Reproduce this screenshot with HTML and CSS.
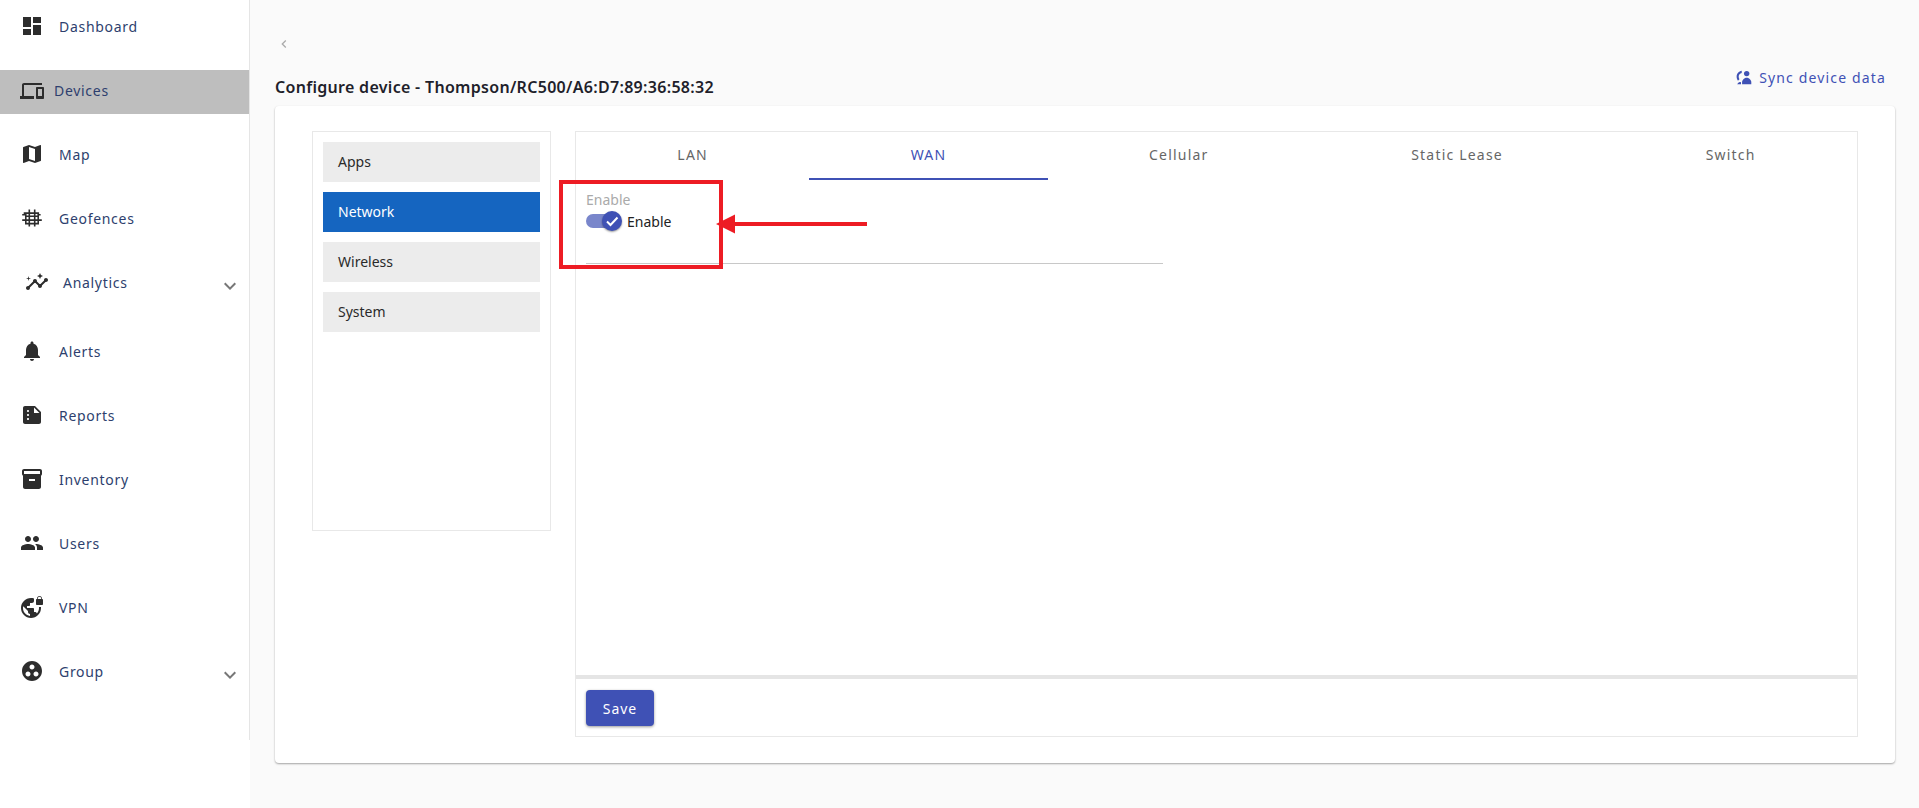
FILE: index.html
```html
<!DOCTYPE html>
<html>
<head>
    <meta charset="UTF-8">
    <title>Configure device</title>
    <link rel="stylesheet" href="styles.css">
</head>
<body>
    <div class="sidebar">
        <div class="nav">
            <a class="nav-item">
                <svg class="nav-icon" viewBox="0 0 24 24"><path d="M3 13h8V3H3v10zm0 8h8v-6H3v6zm10 0h8V11h-8v10zm0-18v6h8V3h-8z"/></svg>
                <span>Dashboard</span>
            </a>
            <a class="nav-item active">
                <svg class="nav-icon" viewBox="0 0 24 24"><path d="M4 6h18V4H4c-1.1 0-2 .9-2 2v11H0v3h14v-3H4V6zm19 2h-6c-.55 0-1 .45-1 1v10c0 .55.45 1 1 1h6c.55 0 1-.45 1-1V9c0-.55-.45-1-1-1zm-1 9h-4v-7h4v7z"/></svg>
                <span>Devices</span>
            </a>
            <a class="nav-item">
                <svg class="nav-icon" viewBox="0 0 24 24"><path d="M20.5 3l-.16.03L15 5.1 9 3 3.36 4.9c-.21.07-.36.25-.36.48V20.5c0 .28.22.5.5.5l.16-.03L9 18.9l6 2.1 5.64-1.9c.21-.07.36-.25.36-.48V3.5c0-.28-.22-.5-.5-.5zM15 19l-6-2.11V5l6 2.11V19z"/></svg>
                <span>Map</span>
            </a>
            <a class="nav-item">
                <svg class="nav-icon" viewBox="0 0 24 24"><path d="M8.5 3.6h1.6v2.6h3.8V3.6h1.6v2.6h3.6v1.7h1.5v1.6H19v3.8h2.8v1.6H19v3.5h-3.5v2.2h-1.6v-2.2h-3.8v2.2H8.5v-2.2H5v-3.5H2.2v-1.6H5V9.5H2.2V7.9h1.5V6.200h4.800zM6.600 7.900v1.600h1.900V7.900zm3.500 0v1.600h3.800V7.900zm5.400 0v1.600h1.900V7.900zm-8.900 3.200v2.200h1.900v-2.200zm3.500 0v2.200h3.800v-2.200zm5.400 0v2.200h1.900v-2.200zm-8.900 3.800v1.900h1.900v-1.900zm3.500 0v1.900h3.800v-1.900zm5.400 0v1.900h1.900v-1.900z"/></svg>
                <span>Geofences</span>
            </a>
            <a class="nav-item has-sub">
                <svg class="nav-icon" viewBox="0 0 24 24"><path d="M21 8c-1.450 0-2.260 1.440-1.930 2.510l-3.550 3.560c-.3-.09-.74-.09-1.040 0l-2.550-2.550C12.270 10.450 11.460 9 10 9c-1.450 0-2.270 1.440-1.930 2.520l-4.560 4.550C2.440 15.740 1 16.550 1 18c0 1.100.9 2 2 2 1.450 0 2.260-1.440 1.930-2.510l4.550-4.560c.3.09.74.09 1.040 0l2.550 2.550C12.730 16.550 13.540 18 15 18c1.450 0 2.270-1.440 1.930-2.520l3.560-3.550c1.070.33 2.510-.48 2.510-1.930 0-1.100-.9-2-2-2z"/><path d="M15 9l.94-2.070L18 6l-2.060-.93L15 3l-.92 2.070L12 6l2.080.93z"/><path d="M3.500 11L4 9l2-.5L4 8l-.5-2L3 8l-2 .5L3 9z"/></svg>
                <span>Analytics</span>
                <svg class="nav-chevron" viewBox="0 0 24 24"><path d="M7.410 8.590L12 13.170l4.590-4.580L18 10l-6 6-6-6z"/></svg>
            </a>
            <a class="nav-item">
                <svg class="nav-icon" viewBox="0 0 24 24"><path d="M12 22c1.100 0 2-.9 2-2h-4c0 1.100.89 2 2 2zm6-6v-5c0-3.070-1.640-5.640-4.500-6.320V4c0-.83-.67-1.500-1.500-1.500s-1.500.67-1.500 1.500v.68C7.630 5.360 6 7.920 6 11v5l-2 2v1h16v-1l-2-2z"/></svg>
                <span>Alerts</span>
            </a>
            <a class="nav-item">
                <svg class="nav-icon" viewBox="0 0 24 24"><path d="M15 3H5c-1.100 0-2 .9-2 2v14c0 1.100.9 2 2 2h14c1.100 0 2-.9 2-2V9l-6-6zM8 17c-.55 0-1-.45-1-1s.45-1 1-1 1 .45 1 1-.45 1-1 1zm0-4c-.55 0-1-.45-1-1s.45-1 1-1 1 .45 1 1-.45 1-1 1zm0-4c-.55 0-1-.45-1-1s.45-1 1-1 1 .45 1 1-.45 1-1 1zm6 1V4.500l5.500 5.500H14z"/></svg>
                <span>Reports</span>
            </a>
            <a class="nav-item">
                <svg class="nav-icon" viewBox="0 0 24 24"><path d="M20 2H4c-1 0-2 .9-2 2v3.010c0 .72.43 1.340 1 1.690V20c0 1.100 1.100 2 2 2h14c.9 0 2-.9 2-2V8.700c.57-.35 1-.97 1-1.690V4c0-1.100-1-2-2-2zm-5 12H9v-2h6v2zm5-7H4V4l16-.02V7z"/></svg>
                <span>Inventory</span>
            </a>
            <a class="nav-item">
                <svg class="nav-icon" viewBox="0 0 24 24"><path d="M16 11c1.660 0 2.990-1.340 2.990-3S17.660 5 16 5c-1.660 0-3 1.340-3 3s1.340 3 3 3zm-8 0c1.660 0 2.990-1.340 2.990-3S9.660 5 8 5C6.340 5 5 6.340 5 8s1.340 3 3 3zm0 2c-2.330 0-7 1.170-7 3.500V19h14v-2.500c0-2.330-4.670-3.500-7-3.500zm8 0c-.29 0-.62.02-.97.05 1.160.84 1.970 1.970 1.970 3.450V19h6v-2.500c0-2.330-4.670-3.500-7-3.500z"/></svg>
                <span>Users</span>
            </a>
            <a class="nav-item">
                <svg class="nav-icon" viewBox="0 0 24 24"><path d="M22 4v-.5C22 2.120 20.880 1 19.500 1S17 2.120 17 3.500V4c-.55 0-1 .45-1 1v4c0 .55.45 1 1 1h5c.55 0 1-.45 1-1V5c0-.55-.45-1-1-1zm-.8 0h-3.400v-.5c0-.94.76-1.700 1.700-1.700s1.700.76 1.700 1.700V4zm-2.280 8c.04.33.08.66.08 1 0 2.080-.8 3.970-2.100 5.390-.26-.81-1-1.390-1.900-1.390h-1v-3c0-.55-.45-1-1-1H7v-2h2c.55 0 1-.45 1-1V8h2c1.100 0 2-.9 2-2V3.460c-.95-.3-1.950-.46-3-.46C5.480 3 1 7.480 1 13s4.480 10 10 10 10-4.480 10-10c0-.34-.02-.67-.05-1h-2.030zM10 20.930c-3.950-.49-7-3.850-7-7.930 0-.62.08-1.210.21-1.790L8 16v1c0 1.100.9 2 2 2v1.930z"/></svg>
                <span>VPN</span>
            </a>
            <a class="nav-item has-sub">
                <svg class="nav-icon" viewBox="0 0 24 24"><path d="M12 2C6.480 2 2 6.480 2 12s4.480 10 10 10 10-4.480 10-10S17.520 2 12 2zM8 17.500c-1.380 0-2.500-1.120-2.500-2.500s1.120-2.500 2.500-2.500 2.500 1.120 2.500 2.500-1.120 2.500-2.500 2.500zM9.500 8c0-1.380 1.120-2.500 2.500-2.500s2.500 1.120 2.500 2.500-1.120 2.500-2.500 2.500S9.500 9.380 9.500 8zm6.500 9.500c-1.380 0-2.500-1.120-2.500-2.500s1.120-2.500 2.500-2.500 2.500 1.120 2.500 2.500-1.120 2.500-2.500 2.500z"/></svg>
                <span>Group</span>
                <svg class="nav-chevron" viewBox="0 0 24 24"><path d="M7.410 8.590L12 13.170l4.590-4.580L18 10l-6 6-6-6z"/></svg>
            </a>
        </div>
    </div>

    <div class="main">
        <div class="back">
            <svg viewBox="0 0 24 24"><path d="M15.410 7.410L14 6l-6 6 6 6 1.410-1.410L10.830 12z"/></svg>
        </div>
        <div class="title-row">
            <h1>Configure device - Thompson/RC500/A6:D7:89:36:58:32</h1>
            <a class="sync">
                <svg viewBox="0 0 24 24"><path d="M9.500 2.500v3.200C7 6 5.200 8.200 5.200 11c0 1.300.4 2.500 1.100 3.500l-2.100 2C3 15 2.300 13.100 2.300 11 2.300 6.400 5.400 3 9.500 2.500zM3 21.500l1.400-1.600c.8-.9 1.700-1.300 2.600-1.400l1.300-.2.200 3.200z"/><circle cx="16.500" cy="6.500" r="3.800"/><path d="M10 21.500v-3.200c0-3.200 3.800-6 6.500-6s6.500 2.800 6.500 6v3.200z"/></svg>
                <span>Sync device data</span>
            </a>
        </div>
        <div class="card">
            <div class="menu">
                <div class="menu-item">Apps</div>
                <div class="menu-item selected">Network</div>
                <div class="menu-item">Wireless</div>
                <div class="menu-item">System</div>
            </div>
            <div class="panel">
                <div class="tabs">
                    <div class="tab">LAN</div>
                    <div class="tab current">WAN</div>
                    <div class="tab">Cellular</div>
                    <div class="tab">Static Lease</div>
                    <div class="tab">Switch</div>
                </div>
                <div class="panel-body">
                    <div class="field">
                        <div class="field-label">Enable</div>
                        <div class="toggle-row">
                            <div class="toggle">
                                <div class="toggle-thumb">
                                    <svg viewBox="0 0 20 20"><path d="M5 10.500l3.500 3.500L15.500 6.500" fill="none" stroke="#fff" stroke-width="2"/></svg>
                                </div>
                            </div>
                            <span>Enable</span>
                        </div>
                    </div>
                </div>
                <div class="panel-footer">
                    <button class="save">Save</button>
                </div>
                <div class="callout-box"></div>
                <svg class="callout-arrow" width="152" height="20" viewBox="0 0 152 20"><path d="M0 10L19 0.500V8H151V12H19V19.500z" fill="#ed1c24"/></svg>
            </div>
        </div>
    </div>
</body>
</html>
```

FILE: styles.css
```css
* {
    box-sizing: border-box;
}
html, body {
    height: 100%;
}
body {
    font-family: "Noto Sans", sans-serif;
    font-size: 14px;
    background-color: #fafafa;
    margin: 0;
    display: flex;
    overflow: hidden;
    color: #222;
}
.sidebar {
    width: 250px;
    flex: none;
    background-color: #fff;
}
.nav {
    height: 740px;
    padding-top: 4px;
    border-right: 1px solid #e5e5e5;
}
.nav-item {
    display: flex;
    align-items: center;
    height: 44px;
    margin-bottom: 20px;
    padding-left: 20px;
    color: #2e3f6e;
    letter-spacing: 0.7px;
}
.nav-icon {
    width: 24px;
    height: 24px;
    fill: #2d2d2d;
    margin-right: 15px;
    flex: none;
}
.nav-item.active {
    margin-top: 22px;
    margin-bottom: 18px;
    padding-bottom: 3px;
    background-color: #bebebe;
}
.nav-item.active .nav-icon {
    margin-right: 10px;
}
.nav-item.has-sub {
    margin-bottom: 25px;
}
.nav-item.has-sub:nth-child(5) .nav-icon {
    margin-left: 5px;
    margin-right: 14px;
}
.nav-chevron {
    width: 24px;
    height: 24px;
    fill: #777;
    margin-left: auto;
    margin-right: 7px;
    margin-top: 8px;
}
.main {
    flex: 1;
    min-width: 0;
    padding: 0 24px 0 25px;
}
.back {
    height: 58px;
    padding: 36px 0 0 1px;
}
.back svg {
    width: 16px;
    height: 16px;
    fill: #aaa;
    display: block;
}
.title-row {
    display: flex;
    justify-content: space-between;
    height: 48px;
}
.title-row h1 {
    margin: 18px 0 0;
    font-size: 16px;
    line-height: 22px;
    font-weight: 600;
    color: #1f1f2b;
    letter-spacing: 0.3px;
}
.sync {
    display: flex;
    align-items: center;
    gap: 7px;
    height: 20px;
    margin: 9px 9px 0 0;
    color: #3f51b5;
    letter-spacing: 1.15px;
}
.sync svg {
    width: 17px;
    height: 17px;
    fill: #3f51b5;
}
.card {
    display: flex;
    gap: 24px;
    height: 657px;
    padding: 25px 37px 26px;
    background-color: #fff;
    border-radius: 4px;
    box-shadow: 0 1px 2px rgba(0,0,0,0.35);
}
.menu {
    width: 239px;
    height: 400px;
    flex: none;
    display: flex;
    flex-direction: column;
    gap: 10px;
    padding: 10px;
    border: 1px solid #e8e8e8;
}
.menu-item {
    height: 40px;
    line-height: 40px;
    padding-left: 15px;
    background-color: #ececec;
    color: #2a2a2a;
}
.menu-item.selected {
    background-color: #1565c0;
    color: #fff;
}
.panel {
    flex: 1;
    min-width: 0;
    display: flex;
    flex-direction: column;
    position: relative;
    border: 1px solid #e8e8e8;
}
.tabs {
    display: flex;
    height: 48px;
}
.tab {
    flex: 1 1 auto;
    text-align: center;
    line-height: 46px;
    color: #666;
    letter-spacing: 1.2px;
    border-bottom: 2px solid transparent;
}
.tab.current {
    color: #3f51b5;
    border-bottom-color: #3f51b5;
}
.panel-body {
    flex: 1;
    padding: 9px 10px;
    border-bottom: 4px solid #e5e5e5;
}
.field {
    width: 577px;
    height: 75px;
    border-bottom: 1px solid #c8c8c8;
}
.field-label {
    height: 22px;
    line-height: 22px;
    color: #aaa;
}
.toggle-row {
    display: flex;
    align-items: center;
    gap: 4px;
    height: 24px;
    margin-top: -2px;
    color: #222;
}
.toggle {
    width: 37px;
    height: 14px;
    border-radius: 7px;
    display: flex;
    align-items: center;
    background-color: #7986cb;
    background-clip: content-box;
    padding-right: 13px;
    position: relative;
}
.toggle-thumb {
    position: absolute;
    left: 16px;
    top: -3px;
    width: 20px;
    height: 20px;
    border-radius: 50%;
    background-color: #3f51b5;
    box-shadow: 0 1px 2px rgba(0,0,0,0.4);
}
.toggle-thumb svg {
    display: block;
}
.panel-footer {
    height: 57px;
    padding: 11px 10px 0;
}
.save {
    display: block;
    width: 68px;
    height: 36px;
    border: none;
    border-radius: 4px;
    background-color: #3f51b5;
    color: #fff;
    font-family: inherit;
    font-size: 14px;
    letter-spacing: 1px;
    box-shadow: 0 1px 3px rgba(0,0,0,0.4);
}
.callout-box {
    position: absolute;
    left: -17px;
    top: 48px;
    width: 164px;
    height: 89px;
    border: 4px solid #ed1c24;
}
.callout-arrow {
    position: absolute;
    left: 140px;
    top: 82px;
}
```
